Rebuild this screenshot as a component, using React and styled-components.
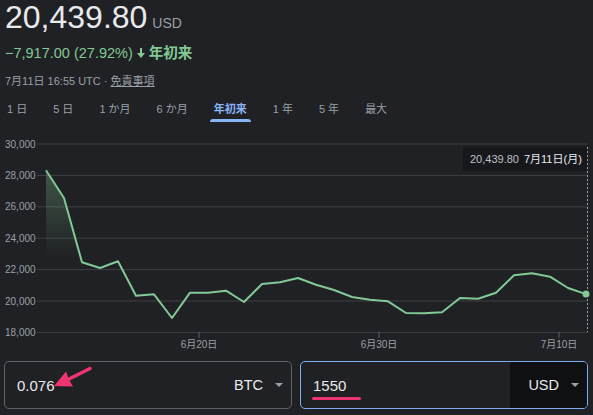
import React from 'react';
import styled, { createGlobalStyle } from 'styled-components';

const GlobalStyle = createGlobalStyle`
  html, body {
    margin: 0;
    padding: 0;
    background: #202124;
  }
  body {
    font-family: "Liberation Sans", Arial, "Noto Sans CJK JP", sans-serif;
    color: #e8eaed;
    overflow: hidden;
  }
`;

const Page = styled.div`
  width: 593px;
  height: 415px;
  display: flex;
  flex-direction: column;
  background: #202124;
`;

const Header = styled.div`
  display: flex;
  flex-direction: column;
  padding-left: 5px;
`;

const PriceRow = styled.div`
  display: flex;
  align-items: baseline;
  gap: 5px;
  height: 34px;
  line-height: 34px;
`;

const Price = styled.span`
  font-size: 32px;
  color: #e8eaed;
`;

const Currency = styled.span`
  font-size: 14px;
  color: #9aa0a6;
`;

const ChangeRow = styled.div`
  margin-top: 9px;
  display: flex;
  align-items: center;
  gap: 3px;
  height: 20px;
  line-height: 20px;
  font-size: 14.5px;
  color: #81c995;
`;

const Period = styled.span`
  font-weight: 700;
`;

const DateRow = styled.div`
  margin-top: 10px;
  height: 16px;
  line-height: 16px;
  font-size: 11px;
  color: #9aa0a6;
`;

const Disclaimer = styled.a`
  color: #9aa0a6;
  text-decoration: underline;
`;

const Tabs = styled.div`
  margin-top: 7px;
  display: flex;
  gap: 18px;
  padding-left: 3px;
  height: 26px;
`;

const Tab = styled.div`
  position: relative;
  padding: 0 4px;
  line-height: 26px;
  font-size: 11px;
  color: ${p => (p.$active ? '#8ab4f8' : '#9aa0a6')};
  font-weight: ${p => (p.$active ? 700 : 400)};

  &::after {
    content: '';
    display: ${p => (p.$active ? 'block' : 'none')};
    position: absolute;
    left: 0;
    right: 0;
    bottom: 0;
    height: 3px;
    border-radius: 3px 3px 0 0;
    background: #8ab4f8;
  }
`;

const ChartWrap = styled.div`
  position: relative;
  height: 234px;
`;

const Tooltip = styled.div`
  position: absolute;
  left: 463px;
  top: 25px;
  width: 124px;
  height: 24px;
  box-sizing: border-box;
  padding-left: 7px;
  background: #17181b;
  font-size: 11px;
  line-height: 24px;
  color: #bdc1c6;
  white-space: nowrap;

  b {
    margin-left: 5px;
    font-weight: 400;
    color: #e8eaed;
  }
`;

const Inputs = styled.div`
  margin-top: 5px;
  display: flex;
  gap: 8px;
  padding: 0 5px 0 4px;
`;

const Field = styled.div`
  position: relative;
  flex: 1;
  height: 48px;
  box-sizing: border-box;
  display: flex;
  border: 1px solid ${p => (p.$focused ? '#7caef2' : '#5f6368')};
  border-radius: 5px;
`;

const Value = styled.div`
  flex: 1;
  display: flex;
  align-items: center;
  padding-left: 12px;
  font-size: 15px;
  color: #e8eaed;
`;

const Select = styled.div`
  width: 77px;
  display: flex;
  align-items: center;
  justify-content: flex-end;
  gap: 12px;
  padding-right: 8px;
  box-sizing: border-box;
  border-radius: 0 4px 4px 0;
  background: ${p => (p.$dark ? '#0f1012' : 'transparent')};
  font-size: 14.5px;
  color: #e8eaed;
`;

const Caret = styled.span`
  width: 0;
  height: 0;
  border-left: 4px solid transparent;
  border-right: 4px solid transparent;
  border-top: 4px solid #9aa0a6;
`;

const Pointer = styled.svg`
  position: absolute;
  left: 0;
  top: 0;
  overflow: visible;
`;

const Marker = styled.div`
  position: absolute;
  left: 11px;
  top: 35px;
  width: 49px;
  height: 3px;
  border-radius: 2px;
  background: #ef3571;
`;

const prices = [
  28325, 26560, 22464, 22101, 22528, 20337, 20426, 18916, 20528, 20528,
  20655, 19935, 21082, 21190, 21464, 21037, 20700, 20254, 20082, 19980,
  19235, 19216, 19279, 20190, 20146, 20528, 21636, 21764, 21547, 20827,
  20440,
];

const tabs = ['1 日', '5 日', '1 か月', '6 か月', '年初来', '1 年', '5 年', '最大'];
const yTicks = [30000, 28000, 26000, 24000, 22000, 20000, 18000];
const xTicks = [
  { x: 199, label: '6月20日' },
  { x: 379, label: '6月30日' },
  { x: 559, label: '7月10日' },
];

const toY = v => 146 + (30000 - v) * 0.0157;
const toX = i => 46 + 18 * i;

const Chart = () => {
  const line = prices.map((v, i) => `${toX(i)},${toY(v).toFixed(1)}`).join(' ');
  const area = `${toX(0)},334 ${line} ${toX(prices.length - 1)},334`;
  const last = prices.length - 1;
  return (
    <svg width="593" height="234" viewBox="0 124 593 234">
      <defs>
        <linearGradient id="fade" gradientUnits="userSpaceOnUse" x1="0" y1="172" x2="0" y2="258">
          <stop offset="0" stopColor="#81c995" stopOpacity="0.32" />
          <stop offset="1" stopColor="#81c995" stopOpacity="0" />
        </linearGradient>
      </defs>
      {yTicks.map(v => (
        <g key={v}>
          <line x1="37" x2="588" y1={toY(v)} y2={toY(v)} stroke="#3c4043" strokeWidth="1" />
          <text x="5" y={toY(v) + 3.5} fontSize="10" fill="#9aa0a6">
            {v.toLocaleString('en-US')}
          </text>
        </g>
      ))}
      {xTicks.map(t => (
        <g key={t.label}>
          <line x1={t.x} x2={t.x} y1="334" y2="340" stroke="#5f6368" />
          <text x={t.x} y="350" fontSize="10" fill="#9aa0a6" textAnchor="middle">
            {t.label}
          </text>
        </g>
      ))}
      <line x1="587.5" x2="587.5" y1="149" y2="334" stroke="#9aa0a6" strokeDasharray="2 2" />
      <polygon points={area} fill="url(#fade)" />
      <polyline points={line} fill="none" stroke="#81c995" strokeWidth="2" strokeLinejoin="round" />
      <circle cx={toX(last)} cy={toY(prices[last])} r="3.5" fill="#81c995" />
    </svg>
  );
};

const DownArrow = () => (
  <svg width="10" height="12" viewBox="0 0 10 12">
    <path d="M5 1v6" stroke="#81c995" strokeWidth="2" />
    <path d="M1 6h8l-4 5z" fill="#81c995" />
  </svg>
);

const App = () => (
  <Page>
    <GlobalStyle />
    <Header>
      <PriceRow>
        <Price>20,439.80</Price>
        <Currency>USD</Currency>
      </PriceRow>
      <ChangeRow>
        <span>−7,917.00 (27.92%)</span>
        <DownArrow />
        <Period>年初来</Period>
      </ChangeRow>
      <DateRow>
        7月11日 16:55 UTC · <Disclaimer>免責事項</Disclaimer>
      </DateRow>
    </Header>
    <Tabs>
      {tabs.map(t => (
        <Tab key={t} $active={t === '年初来'}>{t}</Tab>
      ))}
    </Tabs>
    <ChartWrap>
      <Chart />
      <Tooltip>
        20,439.80<b>7月11日(月)</b>
      </Tooltip>
    </ChartWrap>
    <Inputs>
      <Field>
        <Value>0.076</Value>
        <Select>
          BTC
          <Caret />
        </Select>
        <Pointer width="100" height="48">
          <line x1="85" y1="6.5" x2="63" y2="17.5" stroke="#ef3571" strokeWidth="3.5" strokeLinecap="round" />
          <path d="M49 24 L61 9.5 L64 17.5 L68 24.5 Z" fill="#ef3571" />
        </Pointer>
      </Field>
      <Field $focused>
        <Value>1550</Value>
        <Select $dark>
          USD
          <Caret />
        </Select>
        <Marker />
      </Field>
    </Inputs>
  </Page>
);

export default App;
